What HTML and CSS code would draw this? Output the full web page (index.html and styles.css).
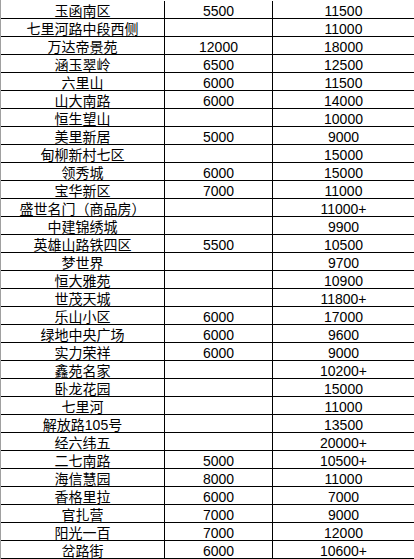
FILE: index.html
```html
<!DOCTYPE html>
<html lang="zh">
<head>
<meta charset="utf-8">
<link rel="stylesheet" href="styles.css">
</head>
<body>
<div class="sheet">
  <div class="row"><div class="c name">玉函南区</div><div class="c a">5500</div><div class="c b">11500</div></div>
  <div class="row"><div class="c name">七里河路中段西侧</div><div class="c a"></div><div class="c b">11000</div></div>
  <div class="row"><div class="c name">万达帝景苑</div><div class="c a">12000</div><div class="c b">18000</div></div>
  <div class="row"><div class="c name">涵玉翠岭</div><div class="c a">6500</div><div class="c b">12500</div></div>
  <div class="row"><div class="c name">六里山</div><div class="c a">6000</div><div class="c b">11500</div></div>
  <div class="row"><div class="c name">山大南路</div><div class="c a">6000</div><div class="c b">14000</div></div>
  <div class="row"><div class="c name">恒生望山</div><div class="c a"></div><div class="c b">10000</div></div>
  <div class="row"><div class="c name">美里新居</div><div class="c a">5000</div><div class="c b">9000</div></div>
  <div class="row"><div class="c name">甸柳新村七区</div><div class="c a"></div><div class="c b">15000</div></div>
  <div class="row"><div class="c name">领秀城</div><div class="c a">6000</div><div class="c b">15000</div></div>
  <div class="row"><div class="c name">宝华新区</div><div class="c a">7000</div><div class="c b">11000</div></div>
  <div class="row"><div class="c name">盛世名门（商品房）</div><div class="c a"></div><div class="c b">11000+</div></div>
  <div class="row"><div class="c name">中建锦绣城</div><div class="c a"></div><div class="c b">9900</div></div>
  <div class="row"><div class="c name">英雄山路铁四区</div><div class="c a">5500</div><div class="c b">10500</div></div>
  <div class="row"><div class="c name">梦世界</div><div class="c a"></div><div class="c b">9700</div></div>
  <div class="row"><div class="c name">恒大雅苑</div><div class="c a"></div><div class="c b">10900</div></div>
  <div class="row"><div class="c name">世茂天城</div><div class="c a"></div><div class="c b">11800+</div></div>
  <div class="row"><div class="c name">乐山小区</div><div class="c a">6000</div><div class="c b">17000</div></div>
  <div class="row"><div class="c name">绿地中央广场</div><div class="c a">6000</div><div class="c b">9600</div></div>
  <div class="row"><div class="c name">实力荣祥</div><div class="c a">6000</div><div class="c b">9000</div></div>
  <div class="row"><div class="c name">鑫苑名家</div><div class="c a"></div><div class="c b">10200+</div></div>
  <div class="row"><div class="c name">卧龙花园</div><div class="c a"></div><div class="c b">15000</div></div>
  <div class="row"><div class="c name">七里河</div><div class="c a"></div><div class="c b">11000</div></div>
  <div class="row"><div class="c name">解放路105号</div><div class="c a"></div><div class="c b">13500</div></div>
  <div class="row"><div class="c name">经六纬五</div><div class="c a"></div><div class="c b">20000+</div></div>
  <div class="row"><div class="c name">二七南路</div><div class="c a">5000</div><div class="c b">10500+</div></div>
  <div class="row"><div class="c name">海信慧园</div><div class="c a">8000</div><div class="c b">11000</div></div>
  <div class="row"><div class="c name">香格里拉</div><div class="c a">6000</div><div class="c b">7000</div></div>
  <div class="row"><div class="c name">官扎营</div><div class="c a">7000</div><div class="c b">9000</div></div>
  <div class="row"><div class="c name">阳光一百</div><div class="c a">7000</div><div class="c b">12000</div></div>
  <div class="row"><div class="c name">岔路街</div><div class="c a">6000</div><div class="c b">10600+</div></div>
</div>
</body>
</html>
```
FILE: styles.css
```css
html, body {
  margin: 0;
  padding: 0;
  background: #ffffff;
}
body {
  font-family: "Liberation Sans", "Noto Sans CJK SC", sans-serif;
  font-size: 14px;
  color: #000;
}
.sheet {
  width: 414px;
  height: 559px;
  box-sizing: border-box;
  padding-top: 1px;
  border-left: 1px solid #a0a0a0;
  overflow: hidden;
}
.row {
  display: grid;
  grid-template-columns: 164px 108px 1fr;
  height: 18px;
  box-sizing: border-box;
  border-bottom: 1px solid #000;
}
.c {
  box-sizing: border-box;
  height: 17px;
  padding-top: 4px;
  line-height: 13px;
  text-align: center;
  white-space: nowrap;
  overflow: visible;
}
.name, .a {
  border-right: 1px solid #000;
}
```
